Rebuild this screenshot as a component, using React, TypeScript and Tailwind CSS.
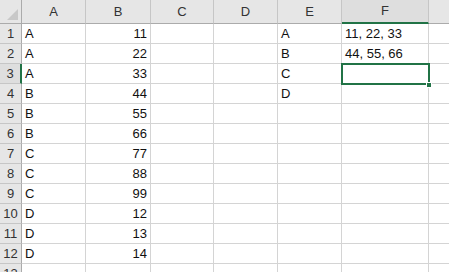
import React from "react";

const colWidths = "grid-cols-[22px_64px_65px_63px_64px_64px_87px_80px]";
// G sits past the right edge, its label is not in view
const cols = ["A", "B", "C", "D", "E", "F", ""];

const dataA = ["A", "A", "A", "B", "B", "B", "C", "C", "C", "D", "D", "D", ""];
const dataB = ["11", "22", "33", "44", "55", "66", "77", "88", "99", "12", "13", "14", ""];
const dataE = ["A", "B", "C", "D"];
const dataF = ["11, 22, 33", "44, 55, 66"];

function HeaderCell({ label, active }: { label: string; active?: boolean }) {
  return (
    <div
      className={`h-6 flex items-center justify-center border-r border-[#c6c6c6] text-[13px] text-[#333] ${
        active ? "bg-[#dedede] border-b-2 border-b-[#217346]" : "bg-[#e6e6e6] border-b border-b-[#ababab]"
      }`}
    >
      {label}
    </div>
  );
}

function Cell({ children, right }: { children?: React.ReactNode; right?: boolean }) {
  return (
    <div
      className={`h-5 flex items-center border-r border-b border-[#d4d4d4] bg-white text-[13px] text-[#111] px-[3px] whitespace-nowrap overflow-visible ${
        right ? "justify-end" : "justify-start"
      }`}
    >
      {children}
    </div>
  );
}

export default function App() {
  return (
    <div className="w-[449px] h-[272px] overflow-hidden bg-white relative" style={{ fontFamily: '"Liberation Sans", Arial, sans-serif' }}>
      <div className={`grid ${colWidths}`}>
        {/* corner */}
        <div className="h-6 bg-[#e6e6e6] border-r border-b border-[#ababab] relative">
          <svg className="absolute right-[3px] bottom-[3px]" width="11" height="11" viewBox="0 0 11 11">
            <polygon points="11,0 11,11 0,11" fill="#c8c8c8" />
          </svg>
        </div>
        {cols.map((c, i) => (
          <HeaderCell key={i} label={c} active={c === "F"} />
        ))}

        {dataA.map((a, i) => {
          const row = i + 1;
          return (
            <React.Fragment key={row}>
              <div
                className={`h-5 flex items-center justify-center text-[13px] text-[#333] border-b border-[#c6c6c6] ${
                  row === 3 ? "bg-[#dedede] border-r-2 border-r-[#217346]" : "bg-[#e6e6e6] border-r border-r-[#ababab]"
                }`}
              >
                {row}
              </div>
              <Cell>{a}</Cell>
              <Cell right>{dataB[i]}</Cell>
              <Cell />
              <Cell />
              <Cell>{dataE[i] ?? ""}</Cell>
              <Cell>{dataF[i] ?? ""}</Cell>
              <Cell />
            </React.Fragment>
          );
        })}
      </div>

      {/* selected cell F3 */}
      <div className="absolute left-[341px] top-[63px] w-[89px] h-[22px] border-2 border-[#217346]" />
      <div className="absolute left-[426px] top-[82px] w-[6px] h-[6px] bg-[#217346] border border-white" />
    </div>
  );
}
